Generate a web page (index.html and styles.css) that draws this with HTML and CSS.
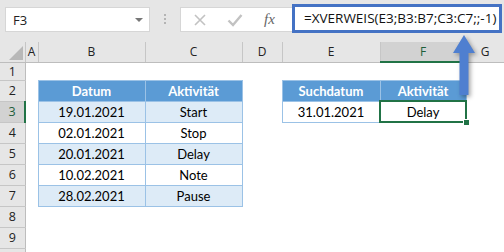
FILE: index.html
```html
<!DOCTYPE html>
<html lang="de">
<head>
  <meta charset="UTF-8" />
  <title>XVERWEIS</title>
  <link rel="stylesheet" href="styles.css">
</head>
<body>
  <div class="app">
    <div class="formula-bar">
      <div class="name-box">
        <span>F3</span>
        <span class="caret"></span>
      </div>
      <div class="grip"><i></i><i></i><i></i></div>
      <div class="fx-buttons">
        <svg class="btn" width="14" height="14" viewBox="0 0 14 14">
          <path d="M2 2 L12 12 M12 2 L2 12" stroke="#c2c2c2" stroke-width="1.6" fill="none"/>
        </svg>
        <svg class="btn" width="16" height="14" viewBox="0 0 16 14">
          <path d="M1.5 7.5 L6 12 L14.5 2" stroke="#c2c2c2" stroke-width="2.4" fill="none"/>
        </svg>
        <span class="fx">fx</span>
      </div>
      <div class="formula">=XVERWEIS(E3;B3:B7;C3:C7;;-1)</div>
    </div>

    <table class="sheet">
      <colgroup>
        <col style="width:25px">
        <col style="width:13px">
        <col style="width:107px">
        <col style="width:97px">
        <col style="width:40px">
        <col style="width:98px">
        <col style="width:86px">
        <col style="width:38px">
      </colgroup>
      <tr class="col-heads">
        <th class="corner"><span></span></th>
        <th>A</th><th>B</th><th>C</th><th>D</th><th>E</th><th class="active">F</th><th>G</th>
      </tr>
      <tr class="row1">
        <th class="rh">1</th><td></td><td></td><td></td><td></td><td></td><td></td><td></td>
      </tr>
      <tr>
        <th class="rh">2</th><td></td>
        <td class="hd">Datum</td><td class="hd">Aktivität</td>
        <td></td>
        <td class="hd">Suchdatum</td><td class="hd">Aktivität</td>
        <td></td>
      </tr>
      <tr>
        <th class="rh active">3</th><td></td>
        <td class="band">19.01.2021</td><td class="band">Start</td>
        <td></td>
        <td class="plain">31.01.2021</td>
        <td class="plain selected">Delay<span class="sel"><i></i></span></td>
        <td></td>
      </tr>
      <tr>
        <th class="rh">4</th><td></td>
        <td class="plain">02.01.2021</td><td class="plain">Stop</td>
        <td></td><td></td><td></td><td></td>
      </tr>
      <tr>
        <th class="rh">5</th><td></td>
        <td class="band">20.01.2021</td><td class="band">Delay</td>
        <td></td><td></td><td></td><td></td>
      </tr>
      <tr>
        <th class="rh">6</th><td></td>
        <td class="plain">10.02.2021</td><td class="plain">Note</td>
        <td></td><td></td><td></td><td></td>
      </tr>
      <tr>
        <th class="rh">7</th><td></td>
        <td class="band">28.02.2021</td><td class="band">Pause</td>
        <td></td><td></td><td></td><td></td>
      </tr>
      <tr>
        <th class="rh">8</th><td></td><td></td><td></td><td></td><td></td><td></td><td></td>
      </tr>
      <tr>
        <th class="rh">9</th><td></td><td></td><td></td><td></td><td></td><td></td><td></td>
      </tr>
      <tr>
        <th class="rh">10</th><td></td><td></td><td></td><td></td><td></td><td></td><td></td>
      </tr>
    </table>

    <svg class="arrow" width="28" height="66" viewBox="0 0 28 66">
      <polygon points="14,2 25,20 18.5,20 18.5,62 9.5,62 9.5,20 3,20" fill="#4f7fd0"/>
    </svg>
  </div>
</body>
</html>
```

FILE: styles.css
```css
body {
  margin: 0;
  background: #fff;
  font-family: 'Open Sans', sans-serif;
}

.app {
  position: relative;
  width: 504px;
  height: 252px;
  overflow: hidden;
}

/* formula bar */

.formula-bar {
  display: flex;
  align-items: flex-start;
  height: 42px;
  padding: 7px 0 0 5px;
  box-sizing: border-box;
  background: #e6e6e6;
}

.name-box {
  display: flex;
  align-items: center;
  justify-content: space-between;
  width: 145px;
  height: 25px;
  box-sizing: border-box;
  padding: 0 6px 0 7px;
  background: #fff;
  border: 1px solid #d6d6d6;
  font-size: 13px;
  color: #222;
}

.caret {
  width: 0;
  height: 0;
  border-left: 4px solid transparent;
  border-right: 4px solid transparent;
  border-top: 4px solid #777;
}

.grip {
  display: flex;
  flex-direction: column;
  gap: 2px;
  margin: 7px 14px 0 14px;
}

.grip i {
  display: block;
  width: 2px;
  height: 2px;
  background: #b4b4b4;
}

.fx-buttons {
  display: flex;
  align-items: center;
  width: 112px;
  height: 25px;
  box-sizing: border-box;
  padding-left: 12px;
  background: #fff;
  border: 1px solid #d6d6d6;
  border-right: none;
}

.fx-buttons .btn {
  margin-right: 20px;
}

.fx {
  margin-left: 1px;
  font-family: 'Liberation Serif', serif;
  font-style: italic;
  font-size: 15px;
  color: #666;
}

.formula {
  width: 210px;
  height: 29px;
  margin-top: -3px;
  box-sizing: border-box;
  padding-left: 9px;
  background: #fff;
  border: 3px solid #4472c4;
  font-size: 13.5px;
  line-height: 23px;
  color: #111;
  white-space: nowrap;
}

/* sheet */

.sheet {
  table-layout: fixed;
  width: 504px;
  border-collapse: collapse;
  font-family: 'Lato', sans-serif;
  font-size: 13px;
  color: #000;
}

.sheet td,
.sheet th {
  padding: 0;
  height: 20px;
  text-align: center;
  white-space: nowrap;
}

.col-heads th {
  height: 19px;
  background: #e6e6e6;
  border-right: 1px solid #c6c6c6;
  border-bottom: 1px solid #bdbdbd;
  font-family: 'Open Sans', sans-serif;
  font-weight: normal;
  font-size: 12px;
  color: #222;
}

.col-heads th.active {
  background: #d2d2d2;
  border-bottom: 2px solid #217346;
  color: #1e5e3a;
}

.corner {
  position: relative;
}

.corner span {
  position: absolute;
  right: 2px;
  bottom: 2px;
  width: 0;
  height: 0;
  border-left: 14px solid transparent;
  border-bottom: 14px solid #b8b8b8;
}

.row1 td,
.row1 th {
  height: 14px;
}

.rh {
  background: #e6e6e6;
  border-right: 1px solid #bdbdbd;
  border-bottom: 1px solid #c6c6c6;
  font-family: 'Open Sans', sans-serif;
  font-weight: normal;
  font-size: 12.5px;
  color: #222;
}

.rh.active {
  background: #d2d2d2;
  border-right: 2px solid #217346;
  color: #1e5e3a;
}

.hd {
  background: #5b9bd5;
  border: 1px solid #9bc2e6;
  color: #fff;
  font-weight: bold;
}

.band {
  background: #ddebf7;
  border: 1px solid #9bc2e6;
}

.plain {
  background: #fff;
  border: 1px solid #9bc2e6;
}

.selected {
  position: relative;
}

.sel {
  position: absolute;
  left: -2px;
  top: -2px;
  right: -1px;
  bottom: -1px;
  border: 2px solid #217346;
}

.sel i {
  position: absolute;
  right: -5px;
  bottom: -5px;
  width: 5px;
  height: 5px;
  background: #217346;
  border: 1px solid #fff;
}

.arrow {
  position: absolute;
  left: 450px;
  top: 33px;
  filter: drop-shadow(2px 2px 2px rgba(0, 0, 0, 0.35));
}
```
